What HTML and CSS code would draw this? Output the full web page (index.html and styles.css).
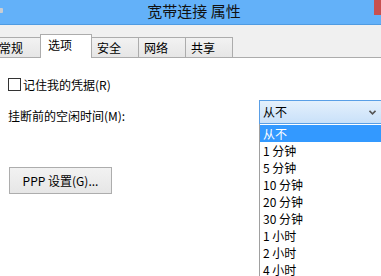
FILE: index.html
```html
<!DOCTYPE html>
<html lang="zh-CN">
<head>
    <meta charset="UTF-8">
    <title>宽带连接 属性</title>
    <link rel="stylesheet" href="styles.css">
</head>
<body>
    <div class="window">
        <!-- Заголовок окна -->
        <div class="titlebar">
            <span class="app-icon"></span>
            <span class="title">宽带连接 属性</span>
            <span class="close"></span>
        </div>

        <!-- Вкладки -->
        <div class="tabs">
            <div class="tab tab-first">常规</div>
            <div class="tab active">选项</div>
            <div class="tab">安全</div>
            <div class="tab">网络</div>
            <div class="tab">共享</div>
        </div>

        <div class="panel">
            <label class="check-row">
                <span class="checkbox"></span>
                <span>记住我的凭据(R)</span>
            </label>

            <div class="idle-row">
                <span class="idle-label">挂断前的空闲时间(M):</span>
                <div class="combo">
                    <div class="combo-box">
                        <span>从不</span>
                        <svg class="chevron" width="7" height="5" viewBox="0 0 7 5">
                            <polyline points="0.5,0.8 3.5,3.8 6.5,0.8" fill="none" stroke="#555" stroke-width="1.6"/>
                        </svg>
                    </div>
                    <!-- Открытый список -->
                    <ul class="combo-list">
                        <li class="selected">从不</li>
                        <li>1 分钟</li>
                        <li>5 分钟</li>
                        <li>10 分钟</li>
                        <li>20 分钟</li>
                        <li>30 分钟</li>
                        <li>1 小时</li>
                        <li>2 小时</li>
                        <li>4 小时</li>
                    </ul>
                </div>
            </div>

            <button class="ppp-button">PPP 设置(G)...</button>
        </div>
    </div>
</body>
</html>
```

FILE: styles.css
```css
/* Общие стили */
body {
    margin: 0;
    width: 381px;
    height: 276px;
    overflow: hidden;
    background: #fff;
    font-family: "Noto Sans CJK SC", sans-serif;
    font-size: 12px;
    color: #000;
}

.window {
    width: 381px;
}

/* Заголовок */
.titlebar {
    display: flex;
    align-items: flex-start;
    height: 24px;
    background: #63b1f9;
    border-bottom: 1px solid #4f9be2;
}

.app-icon {
    width: 4px;
    height: 5px;
    margin-top: 8px;
    margin-left: -1px;
    background: #c9cdd2;
    border-radius: 1px;
}

.title {
    flex: 1;
    padding-left: 11px;
    text-align: center;
    font-size: 15px;
    line-height: 22px;
    color: #111;
}

.close {
    width: 7px;
    height: 15px;
    background: #c75050;
}

/* Вкладки */
.tabs {
    display: flex;
    align-items: flex-end;
    height: 32px;
    background: #f0f0f0;
    border-bottom: 1px solid #acacac;
}

.tab {
    box-sizing: border-box;
    width: 48px;
    height: 20px;
    margin-left: -1px;
    padding-left: 5px;
    line-height: 19px;
    border: 1px solid #acacac;
    border-bottom: none;
    background: linear-gradient(#f2f2f2, #e6e6e6);
}

.tab-first {
    margin-left: -7px;
}

.tab.active {
    position: relative;
    z-index: 1;
    width: 52px;
    height: 24px;
    margin-bottom: -1px;
    padding-left: 7px;
    line-height: 20px;
    background: #fff;
}

/* Содержимое вкладки */
.panel {
    padding: 0 8px;
}

.check-row {
    display: flex;
    align-items: center;
    gap: 2px;
    height: 17px;
    margin-top: 18px;
    line-height: 17px;
}

.checkbox {
    box-sizing: border-box;
    width: 13px;
    height: 13px;
    border: 1px solid #333;
    background: #fff;
}

.idle-row {
    display: grid;
    grid-template-columns: 251px 127px;
    margin-top: 7px;
}

.idle-label {
    padding-top: 7px;
    line-height: 17px;
}

.combo {
    position: relative;
}

.combo-box {
    box-sizing: border-box;
    display: flex;
    align-items: center;
    justify-content: space-between;
    height: 24px;
    padding: 0 9px 0 3px;
    border: 1px solid #5a9fe6;
    background: linear-gradient(#e4f0fc, #c9e1f9);
    line-height: 22px;
}

.combo-list {
    position: absolute;
    top: 24px;
    left: 0;
    z-index: 2;
    width: 127px;
    margin: 0;
    padding: 1px 0 0;
    list-style: none;
    background: #fff;
    border-left: 1px solid #a0a0a0;
}

.combo-list li {
    height: 17px;
    padding-left: 3px;
    line-height: 17px;
}

.combo-list li.selected {
    background: #3399ff;
    color: #fff;
}

.ppp-button {
    display: block;
    box-sizing: border-box;
    width: 103px;
    height: 27px;
    margin: 43px 0 0 1px;
    padding: 0;
    border: 1px solid #adadad;
    background: linear-gradient(#f2f2f2, #e6e6e6);
    font-family: inherit;
    font-size: 12px;
    color: #000;
}
```
